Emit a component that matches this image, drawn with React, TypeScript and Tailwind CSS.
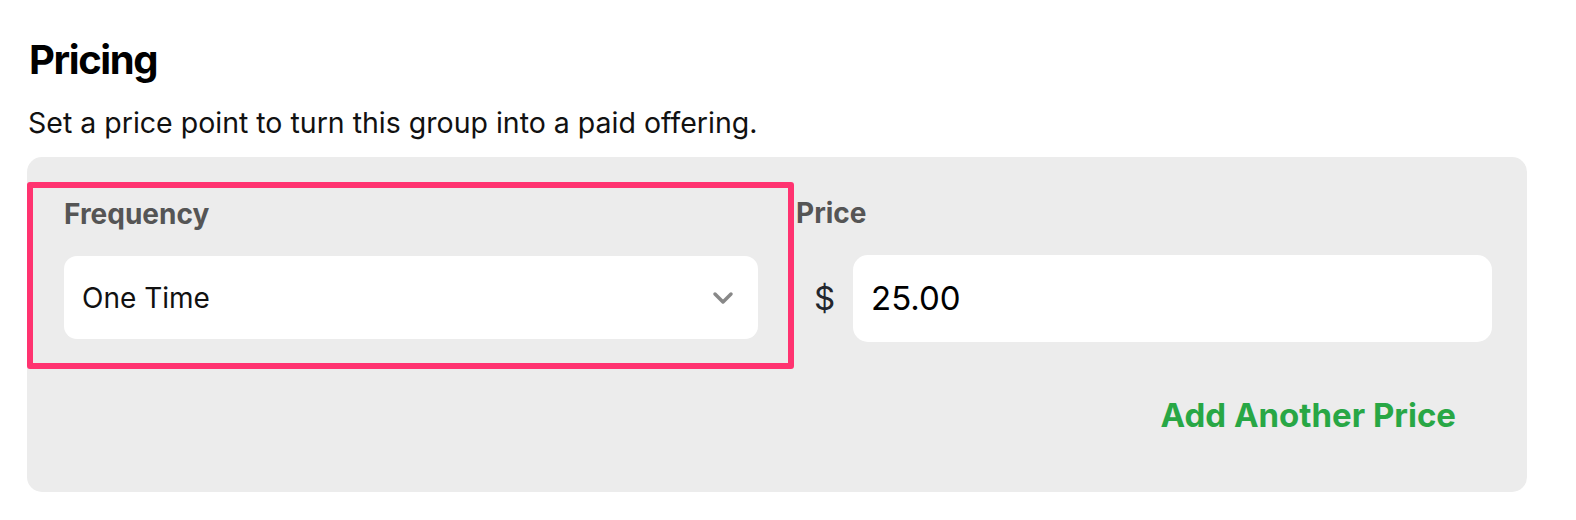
import React from "react";

export default function App() {
  return (
    <div className="w-full h-[520px] overflow-hidden bg-white" style={{ fontFamily: "Inter, 'Noto Sans', sans-serif" }}>
      <div className="pl-[27px] pt-[36px] w-[1560px]">
        <h1 className="pl-[2px] text-[40px] leading-[48px] font-bold text-black tracking-[-0.035em]">Pricing</h1>
        <p className="pl-[1px] mt-[22px] text-[28.5px] leading-[34px] text-[#111]">Set a price point to turn this group into a paid offering.</p>
        <div className="mt-[17px] w-[1500px] h-[335px] bg-[#ececec] rounded-[15px] pt-[25px] flex flex-col">
          <div className="flex items-start">
            <div className="w-[767px] h-[187px] border-[6px] border-[#ff3370] rounded-[3px] pl-[31px] pr-[30px] pt-[9px]">
              <div className="text-[28px] leading-[34px] font-bold text-[#555]">Frequency</div>
              <div className="mt-[25px] h-[83px] bg-white rounded-[13px] flex items-center justify-between pl-[18px] pr-[24px]">
                <span className="text-[28px] text-[#111]">One Time</span>
                <svg width="22" height="14" viewBox="0 0 22 14" fill="none" stroke="#888888" strokeWidth="3.5" strokeLinecap="round" strokeLinejoin="round">
                  <path d="M3 3L11 11L19 3" />
                </svg>
              </div>
            </div>
            <div className="flex-1 pl-[2px] pr-[35px] pt-[14px]">
              <div className="text-[28px] leading-[34px] font-bold text-[#555]">Price</div>
              <div className="mt-[25px] flex items-center">
                <span className="w-[57px] text-center text-[33px] text-[#23262d]">$</span>
                <div className="flex-1 h-[87px] bg-white rounded-[15px] flex items-center pl-[18px]">
                  <span className="text-[33px] text-black">25.00</span>
                </div>
              </div>
            </div>
          </div>
          <div className="flex justify-end pr-[71px] mt-[26px]">
            <span className="text-[33px] leading-[40px] font-bold text-[#28a745]">Add Another Price</span>
          </div>
        </div>
      </div>
    </div>
  );
}
